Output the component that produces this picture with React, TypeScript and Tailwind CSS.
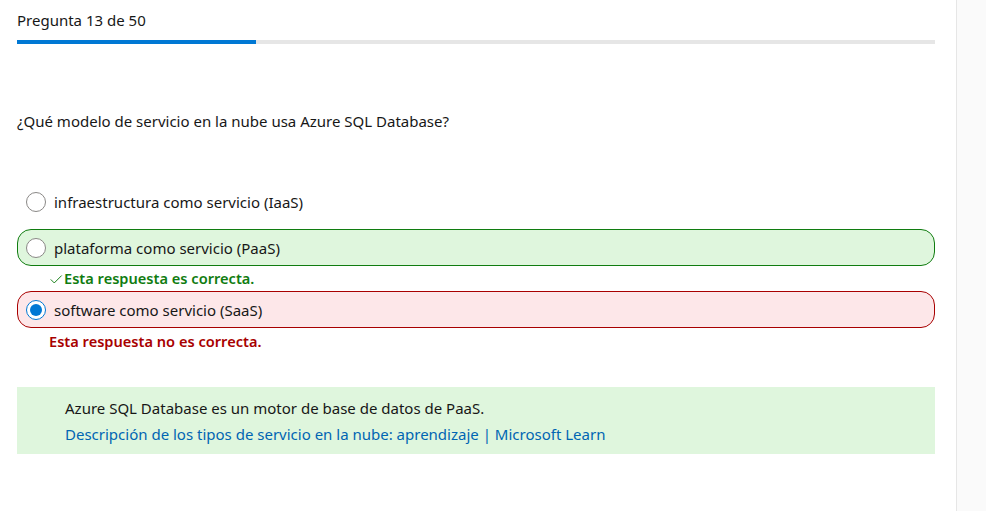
import React from "react";

const FONT = "font-['Segoe_UI','Noto_Sans','Open_Sans',sans-serif]";

type Option = {
  label: string;
  state: "none" | "correct" | "wrong";
  selected?: boolean;
};

const OPTIONS: Option[] = [
  { label: "infraestructura como servicio (IaaS)", state: "none" },
  { label: "plataforma como servicio (PaaS)", state: "correct" },
  { label: "software como servicio (SaaS)", state: "wrong", selected: true },
];

function Radio({ selected }: { selected?: boolean }) {
  if (selected) {
    return (
      <span className="flex h-[20px] w-[20px] shrink-0 items-center justify-center rounded-full border border-[#0078d4] bg-white">
        <span className="h-[12px] w-[12px] rounded-full bg-[#0078d4]" />
      </span>
    );
  }
  return <span className="h-[20px] w-[20px] shrink-0 rounded-full border border-[#8a8886] bg-white" />;
}

function OptionRow({ option }: { option: Option }) {
  const box =
    option.state === "correct"
      ? "border-[#107c10] bg-[#dff6dd]"
      : option.state === "wrong"
        ? "border-[#a80000] bg-[#fde7e9]"
        : "border-transparent";
  return (
    <div className={`flex h-[37px] items-center gap-[8px] rounded-[14px] border pl-[8px] ${box}`}>
      <Radio selected={option.selected} />
      <span className="text-[15px] leading-[20px] text-[#171717]">{option.label}</span>
    </div>
  );
}

export default function App() {
  return (
    <div className={`flex h-[511px] w-full bg-white ${FONT}`}>
      <main className="w-[957px] shrink-0 border-r border-[#e6e6e6] pl-[17px] pr-[21px] pt-[10px]">
        <p className="text-[15px] leading-[20px] text-[#171717]">Pregunta 13 de 50</p>
        <div className="mt-[10px] h-[4px] w-full bg-[#e6e6e6]">
          <div className="h-full bg-[#0078d4]" style={{ width: `${(13 / 50) * 100}%` }} />
        </div>

        <p className="mt-[67px] text-[15px] leading-[20px] text-[#171717]">
          ¿Qué modelo de servicio en la nube usa Azure SQL Database?
        </p>

        <div className="mt-[52px] flex flex-col">
          <OptionRow option={OPTIONS[0]} />
          <div className="mt-[9px]">
            <OptionRow option={OPTIONS[1]} />
          </div>
          <div className="flex h-[25px] items-center pl-[32px] text-[14.6px] font-semibold text-[#107c10]">
            <svg width="14" height="14" viewBox="0 0 16 16" fill="none" stroke="#107c10" strokeWidth="1.1" className="mr-[1px]">
              <polyline points="2,8.5 6,12.5 14.5,4" />
            </svg>
            Esta respuesta es correcta.
          </div>
          <OptionRow option={OPTIONS[2]} />
          <div className="flex h-[28px] items-center pl-[32px] text-[14.6px] font-semibold text-[#a80000]">
            Esta respuesta no es correcta.
          </div>
        </div>

        <div className="mt-[31px] bg-[#dff6dd] pb-[7px] pl-[48px] pt-[8px] text-[15px] leading-[26px]">
          <p className="text-[#171717]">Azure SQL Database es un motor de base de datos de PaaS.</p>
          <a href="#" className="text-[#0065b3]">
            Descripción de los tipos de servicio en la nube: aprendizaje | Microsoft Learn
          </a>
        </div>
      </main>
      <aside className="flex-1 bg-[#fafafa]" />
    </div>
  );
}
